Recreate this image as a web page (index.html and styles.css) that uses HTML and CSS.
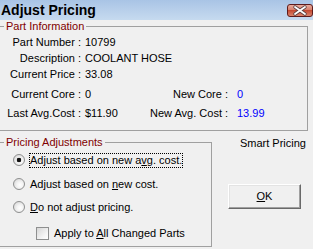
FILE: index.html
```html
<!DOCTYPE html>
<html lang="en">
<head>
  <meta charset="UTF-8" />
  <title>Adjust Pricing</title>
  <link rel="stylesheet" href="styles.css">
</head>
<body>
  <div class="titlebar">
    <span class="title">Adjust Pricing</span>
    <svg class="close" width="26" height="13" viewBox="0 0 26 13">
      <defs>
        <linearGradient id="cg" x1="0" y1="0" x2="0" y2="1">
          <stop offset="0" stop-color="#eab0a2"/>
          <stop offset="0.45" stop-color="#d8806c"/>
          <stop offset="0.5" stop-color="#c54a32"/>
          <stop offset="1" stop-color="#dc8a72"/>
        </linearGradient>
      </defs>
      <rect x="0.5" y="0.5" width="25" height="12" rx="2.5" fill="url(#cg)" stroke="#5e1c1c"/>
      <path d="M8 3 L18 10 M18 3 L8 10" stroke="#5a4040" stroke-width="3.4" stroke-linecap="round"/>
      <path d="M8 3 L18 10 M18 3 L8 10" stroke="#fff" stroke-width="1.8" stroke-linecap="round"/>
    </svg>
  </div>

  <fieldset class="group part-info">
    <legend>Part Information</legend>
    <div class="info-grid">
      <span class="lbl">Part Number :</span><span class="val wide">10799</span>
      <span class="lbl">Description :</span><span class="val wide">COOLANT HOSE</span>
      <span class="lbl">Current Price :</span><span class="val wide">33.08</span>
      <span class="lbl">Current Core :</span><span class="val">0</span>
      <span class="lbl">New Core :</span><span class="val new">0</span>
      <span class="lbl">Last Avg.Cost :</span><span class="val">$11.90</span>
      <span class="lbl">New Avg. Cost :</span><span class="val new">13.99</span>
    </div>
  </fieldset>

  <div class="lower">
    <fieldset class="group pricing">
      <legend>Pricing Adjustments</legend>
      <div class="options">
        <div class="option">
          <span class="radio checked"></span>
          <span class="text focus">Adjust based on new a<u>v</u>g. cost.</span>
        </div>
        <div class="option">
          <span class="radio"></span>
          <span class="text">Adjust based on <u>n</u>ew cost.</span>
        </div>
        <div class="option">
          <span class="radio"></span>
          <span class="text"><u>D</u>o not adjust pricing.</span>
        </div>
        <div class="option sub">
          <span class="check"></span>
          <span class="text">Apply to <u>A</u>ll Changed Parts</span>
        </div>
      </div>
    </fieldset>

    <div class="side">
      <div class="smart">Smart Pricing</div>
      <button class="ok"><u>O</u>K</button>
    </div>
  </div>
</body>
</html>
```

FILE: styles.css
```css
body {
  margin: 0;
  width: 313px;
  height: 249px;
  overflow: hidden;
  background: #f0f0f0;
  font-family: "Liberation Sans", Arial, sans-serif;
  font-size: 11px;
  line-height: 13px;
  color: #000;
}
.titlebar {
  height: 20px;
  display: flex;
  justify-content: space-between;
  align-items: flex-start;
  background: linear-gradient(#a9c4e5, #c6daef);
}
.title {
  padding: 2px 0 0 1px;
  font-size: 14px;
  line-height: 16px;
  font-weight: bold;
}
.close {
  margin-top: 4px;
  display: block;
}
.group {
  box-sizing: border-box;
  border: 1px solid #a0a0a0;
  padding: 0;
  min-width: 0;
}
.group legend {
  margin-left: 5px;
  padding: 0 2px;
  color: #800000;
}
.part-info {
  margin: 0 5px 0 -2px;
  padding: 3px 0 10px 0;
}
.info-grid {
  display: grid;
  grid-template-columns: 82px 69px 78px auto;
  grid-template-rows: 16px 16px 20px 19px 13px;
  align-items: start;
  white-space: nowrap;
}
.lbl {
  text-align: right;
}
.val {
  padding-left: 4px;
}
.val.wide {
  grid-column: span 3;
}
.val.new {
  padding-left: 9px;
  color: #0000ff;
}
.lbl + .val.new {
  grid-column: 4;
}
.info-grid .val:nth-child(8) {
  grid-column: 2;
}
.lower {
  display: flex;
  margin-top: 5px;
}
.pricing {
  width: 214px;
  margin: 0 0 0 -2px;
  flex: none;
}
.options {
  display: flex;
  flex-direction: column;
  padding: 3px 0 5px 14px;
}
.option {
  display: flex;
  align-items: center;
  height: 16px;
  gap: 4px;
  white-space: nowrap;
}
.option + .option {
  margin-top: 8px;
}
.option:nth-child(3) {
  margin-top: 7px;
}
.option.sub {
  margin-top: 10px;
  padding-left: 23px;
}
.text {
  border: 1px solid transparent;
  padding: 0;
}
.text.focus {
  border: 1px dotted #000;
}
.radio {
  box-sizing: border-box;
  width: 12px;
  height: 12px;
  border: 1px solid #8e8f8f;
  border-radius: 50%;
  background: radial-gradient(circle at 60% 60%, #ffffff 0, #f4f4f4 35%, #cfcfcf 100%);
  flex: none;
}
.radio.checked {
  background: radial-gradient(circle, #111 0, #111 2px, transparent 2.6px),
              radial-gradient(circle at 60% 60%, #ffffff 0, #f4f4f4 35%, #cfcfcf 100%);
}
.check {
  box-sizing: border-box;
  width: 13px;
  height: 13px;
  border: 1px solid #8e8f8f;
  background: linear-gradient(135deg, #d6d6d6, #f6f6f6 70%, #fff);
  flex: none;
}
.side {
  flex: 1;
  display: flex;
  flex-direction: column;
  padding-top: 1px;
}
.smart {
  text-align: right;
  padding-right: 7px;
}
.ok {
  box-sizing: border-box;
  width: 73px;
  height: 25px;
  margin: 34px 0 0 16px;
  padding: 0;
  font: inherit;
  color: #000;
  background: #f0f0f0;
  border: 1px solid;
  border-color: #fff #696969 #696969 #fff;
  box-shadow: inset -1px -1px #a0a0a0, inset 1px 1px #e3e3e3;
}
```
